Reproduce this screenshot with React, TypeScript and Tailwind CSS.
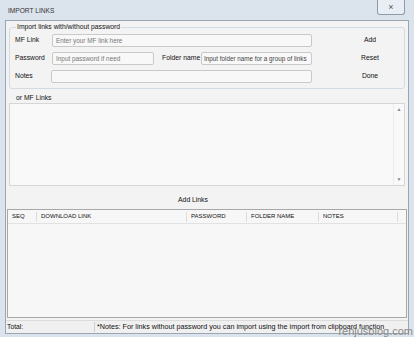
export default function App() {
  const headers = [
    { label: "SEQ", w: "w-[29px]" },
    { label: "DOWNLOAD LINK", w: "w-[150px]" },
    { label: "PASSWORD", w: "w-[60px]" },
    { label: "FOLDER NAME", w: "w-[72px]" },
    { label: "NOTES", w: "w-[79px]" },
  ];

  return (
    <div
      className="flex h-[337px] w-[414px] flex-col bg-[#dbe4ec] text-[6.8px] text-[#111]"
      style={{ fontFamily: '"Liberation Sans", Arial, sans-serif' }}
    >
      {/* Title bar */}
      <div className="flex h-[20px] shrink-0 items-start justify-between pl-[8px] pr-[9px]">
        <div className="pt-[6px] text-[6.6px] text-[#333]">IMPORT LINKS</div>
        <div className="flex h-[15px] w-[28px] items-center justify-center rounded-b-[3px] border border-t-0 border-[#8e9aa6] bg-[#e8eef3] text-[9px] leading-none text-[#555]">
          ×
        </div>
      </div>

      {/* Client area */}
      <div className="mx-[5px] flex flex-1 flex-col border border-[#9aa6b2] bg-[#f3f3f3]">
        {/* Group box */}
        <fieldset className="mx-[3px] mt-[1px] rounded-[3px] border border-[#d3dbe2] px-[5px] pb-[5px] pt-[0px]">
          <legend className="ml-[1px] px-[1px] leading-[10px]">Import links with/without password</legend>
          <div className="flex flex-col gap-[5px] pt-[2px]">
            <div className="flex h-[13px] items-center">
              <span className="w-[37px]">MF Link</span>
              <div className="flex h-[13px] w-[260px] items-center rounded-[2px] border border-[#c9c9c9] bg-[#f8f8f8] pl-[3px] text-[6.4px] text-[#777]">
                Enter your MF link here
              </div>
              <span className="ml-[43px] w-[30px] text-center">Add</span>
            </div>
            <div className="flex h-[13px] items-center">
              <span className="w-[37px]">Password</span>
              <div className="flex h-[13px] w-[102px] items-center rounded-[2px] border border-[#c9c9c9] bg-[#f8f8f8] pl-[3px] text-[6.4px] text-[#777]">
                Input password if need
              </div>
              <span className="ml-[8px] w-[39px] whitespace-nowrap">Folder name</span>
              <div className="flex h-[13px] w-[111px] items-center overflow-hidden whitespace-nowrap rounded-[2px] border border-[#c9c9c9] bg-[#f8f8f8] pl-[2px] text-[6.3px] text-[#444]">
                Input folder name for a group of links
              </div>
              <span className="ml-[43px] w-[30px] text-center">Reset</span>
            </div>
            <div className="flex h-[13px] items-center">
              <span className="w-[36px]">Notes</span>
              <div className="h-[13px] w-[261px] rounded-[2px] border border-[#c9c9c9] bg-[#f8f8f8]" />
              <span className="ml-[43px] w-[30px] text-center">Done</span>
            </div>
          </div>
        </fieldset>

        {/* MF links text area */}
        <div className="mt-[4px] pl-[10px] leading-[10px]">or MF Links</div>
        <div className="mx-[3px] flex h-[83px] border border-[#d6d6d6] bg-[#f9f9f9]">
          <div className="flex-1" />
          <div className="flex w-[11px] flex-col items-center justify-between border-l border-[#ececec] py-[3px] text-[5px] leading-none text-[#888]">
            <span>▲</span>
            <span>▼</span>
          </div>
        </div>

        {/* Add links */}
        <div className="mt-[9px] flex justify-center pr-[28px] leading-[10px]">Add Links</div>

        {/* Table */}
        <div className="mx-[1px] mt-[4px] flex h-[109px] flex-col border border-[#a8a8a8] bg-[#f7f7f7]">
          <div className="flex h-[14px] items-center border-b border-[#e2e2e2] text-[6px]">
            {headers.map((h) => (
              <div key={h.label} className={`${h.w} flex h-[10px] items-center border-r border-[#dcdcdc] pl-[4px]`}>
                {h.label}
              </div>
            ))}
          </div>
          <div className="flex-1" />
        </div>

        {/* Status bar */}
        <div className="mt-[2px] flex h-[13px] items-center border-t border-[#dcdcdc] bg-[#f0f0f0]">
          <div className="w-[89px] border-r border-[#cfcfcf] pl-[1px]">Total:</div>
          <div className="whitespace-nowrap pl-[2px] text-[7.2px]">
            *Notes: For links without password you can import using the import from clipboard function
          </div>
        </div>
      </div>

      {/* Bottom frame with watermark */}
      <div className="relative h-[5px] shrink-0">
        <span className="absolute bottom-[2px] right-[1px] text-[11px] leading-[11px] text-[#8a8a8a]">
          renjusblog.com
        </span>
      </div>
    </div>
  );
}
